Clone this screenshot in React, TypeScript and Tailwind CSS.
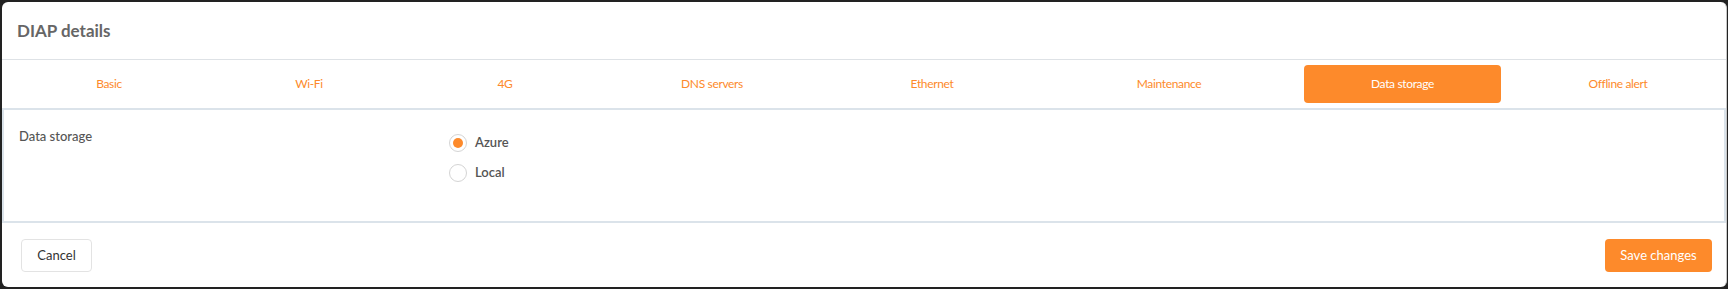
import { useState } from 'react'

const tabs = [
    { label: 'Basic', w: 'w-[214px]' },
    { label: 'Wi-Fi', w: 'w-[186px]' },
    { label: '4G', w: 'w-[206px]' },
    { label: 'DNS servers', w: 'w-[208px]' },
    { label: 'Ethernet', w: 'w-[232px]' },
    { label: 'Maintenance', w: 'w-[242px]' },
    { label: 'Data storage', w: 'w-[225px]' },
    { label: 'Offline alert', w: 'w-[206px]' },
]

function Radio({ label, checked, onClick }: { label: string; checked: boolean; onClick: () => void }) {
    return (
        <label onClick={onClick} className="flex items-center h-[30px] cursor-pointer">
            <span className="w-[18px] h-[18px] rounded-full border border-[#d4d4d4] bg-white flex items-center justify-center">
                {checked && <span className="w-[10px] h-[10px] rounded-full bg-[#fd8a2b]" />}
            </span>
            <span className="ml-[8px] text-[13px] font-semibold text-[#555]">{label}</span>
        </label>
    )
}

export default function App() {
    const [active, setActive] = useState('Data storage')
    const [storage, setStorage] = useState('Azure')

    return (
        <div className="w-[1728px] h-[289px] bg-[#222] pt-[2px] pl-[2px] overflow-hidden" style={{ fontFamily: 'Lato, "Open Sans", sans-serif' }}>
            <div className="w-[1725px] h-[285px] bg-white rounded-md border-r border-[#c8c8c8] flex flex-col overflow-hidden">
                <div className="h-[58px] shrink-0 border-b border-[#dee2e6] flex items-center pl-[15px]">
                    <h2 className="text-[17px] font-bold text-[#666]">DIAP details</h2>
                </div>

                {/* tab widths follow the original nav-fill layout */}
                <ul className="flex w-full h-[48px] shrink-0">
                    {tabs.map((t) => (
                        <li key={t.label} className={`${t.w} shrink-0 px-[14px] py-[5px]`}>
                            <button
                                onClick={() => setActive(t.label)}
                                className={`block w-full py-[10px] rounded text-center text-[12px] tracking-[-0.35px] leading-[18px] ${active === t.label
                                    ? 'bg-[#fd8a2b] text-white'
                                    : 'text-[#fd8a2b]'
                                    }`}
                            >
                                {t.label}
                            </button>
                        </li>
                    ))}
                </ul>

                <div className="h-[115px] shrink-0 border-2 border-[#dbe3ea] flex pl-[15px] pt-[16px]">
                    <div className="w-[430px] text-[13px] font-medium text-[#555] leading-[20px]">Data storage</div>
                    <div className="pt-[2px]">
                        <Radio label="Azure" checked={storage === 'Azure'} onClick={() => setStorage('Azure')} />
                        <Radio label="Local" checked={storage === 'Local'} onClick={() => setStorage('Local')} />
                    </div>
                </div>

                <div className="flex-1 flex items-start justify-between pl-[19px] pr-[14px] pt-[16px]">
                    <button className="h-[33px] w-[71px] rounded border border-[#e3e3e3] text-[13px] text-[#333]">
                        Cancel
                    </button>
                    <button className="h-[33px] w-[107px] rounded bg-[#fd8a2b] text-[13px] text-white">
                        Save changes
                    </button>
                </div>
            </div>
        </div>
    )
}
